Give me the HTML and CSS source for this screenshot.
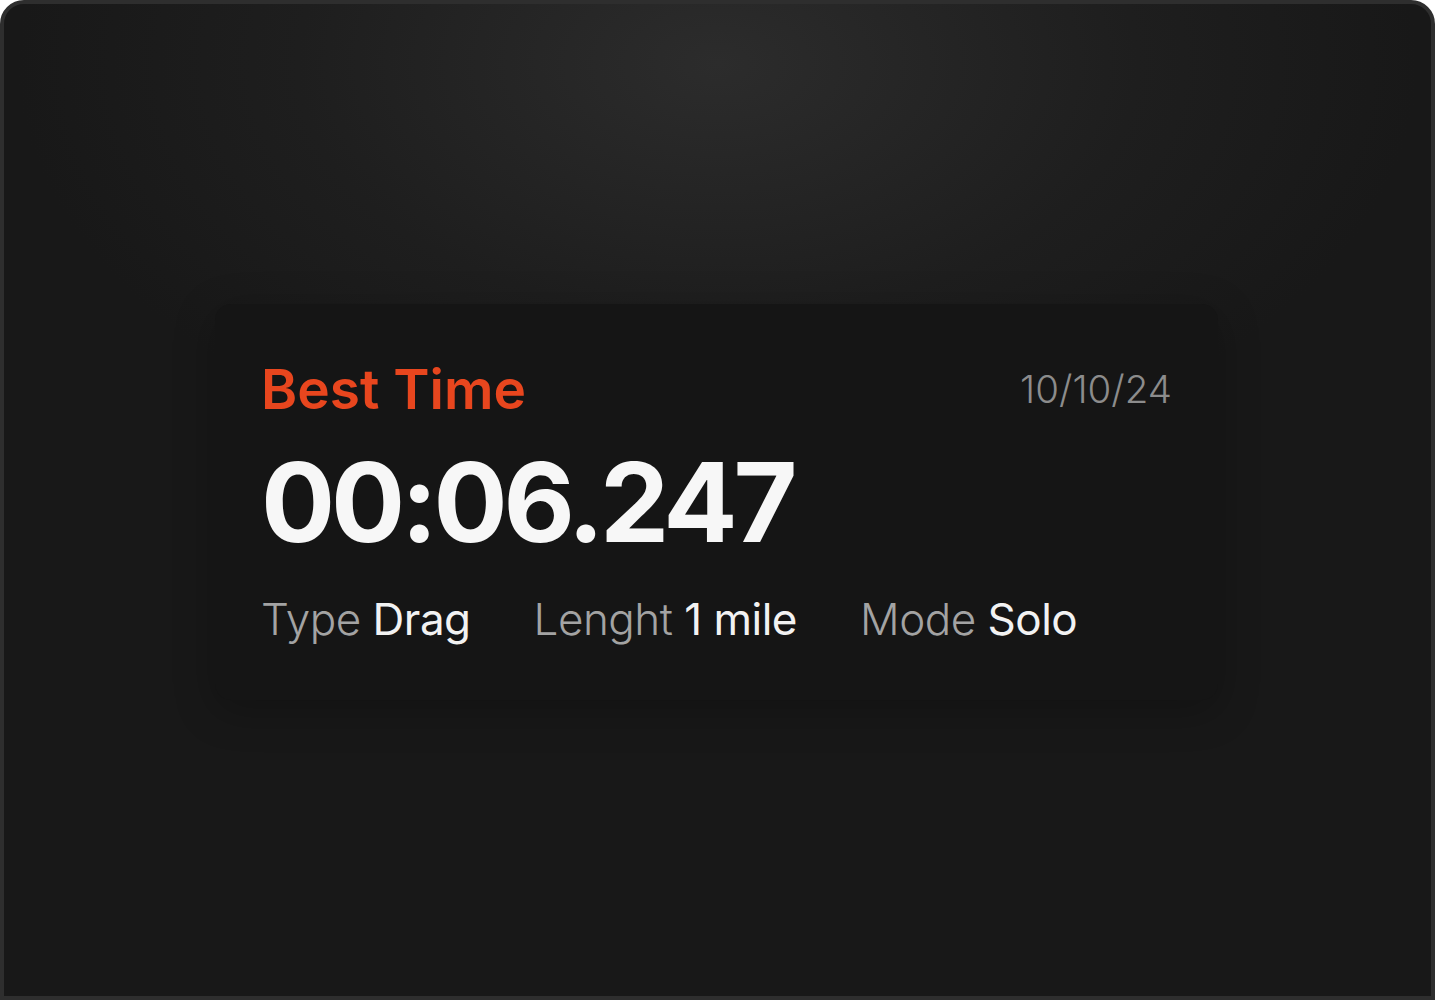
FILE: index.html
```html
<!DOCTYPE html>
<html lang="en">
<head>
<meta charset="utf-8">
<title>Best Time</title>
<link rel="stylesheet" href="styles.css">
</head>
<body>
<div class="frame">
  <section class="card">
    <div class="card-head">
      <h1 class="title">Best Time</h1>
      <span class="date">10/10/24</span>
    </div>
    <div class="time">00:06.247</div>
    <div class="meta">
      <span class="meta-item"><span class="label">Type</span> <span class="value">Drag</span></span>
      <span class="meta-item"><span class="label">Lenght</span> <span class="value">1 mile</span></span>
      <span class="meta-item"><span class="label">Mode</span> <span class="value">Solo</span></span>
    </div>
  </section>
</div>
</body>
</html>
```
FILE: styles.css
```css
html, body {
  margin: 0;
  padding: 0;
  background: #ffffff;
}
body {
  width: 1435px;
  height: 1000px;
  font-family: Inter, "Noto Sans", sans-serif;
}
.frame {
  box-sizing: border-box;
  width: 1435px;
  height: 1000px;
  border: 4px solid #2e2e2e;
  border-radius: 24px 24px 0 0;
  background: radial-gradient(ellipse 700px 420px at 50% 60px, #2c2c2c 0%, #1e1e1e 60%, #181818 100%);
  background-color: #181818;
  padding-top: 300px;
  display: flex;
  justify-content: center;
}
.card {
  box-sizing: border-box;
  width: 1003px;
  height: 396px;
  margin-left: -2px;
  background: #151515;
  border-radius: 16px;
  box-shadow: 0 10px 40px rgba(0,0,0,0.25);
  padding: 53px 46px 0 46px;
}
.card-head {
  display: flex;
  justify-content: space-between;
  align-items: flex-start;
}
.title {
  margin: 0;
  font-size: 55px;
  font-weight: 600;
  color: #e8461e;
  letter-spacing: 0;
  line-height: 64px;
}
.date {
  margin-top: 8px;
  font-size: 38.5px;
  line-height: 48px;
  font-weight: 300;
  color: #8c8c8c;
  letter-spacing: 0;
}
.time {
  font-size: 110px;
  font-weight: 700;
  color: #f7f7f7;
  letter-spacing: -4.2px;
  line-height: 110px;
  margin-top: 26px;
}
.meta {
  display: flex;
  gap: 63px;
  margin-top: 37px;
  font-size: 44px;
  line-height: 50px;
  letter-spacing: -0.5px;
}
.label {
  color: #a3a3a3;
  font-weight: 300;
}
.value {
  color: #f2f2f2;
  font-weight: 400;
}
```
